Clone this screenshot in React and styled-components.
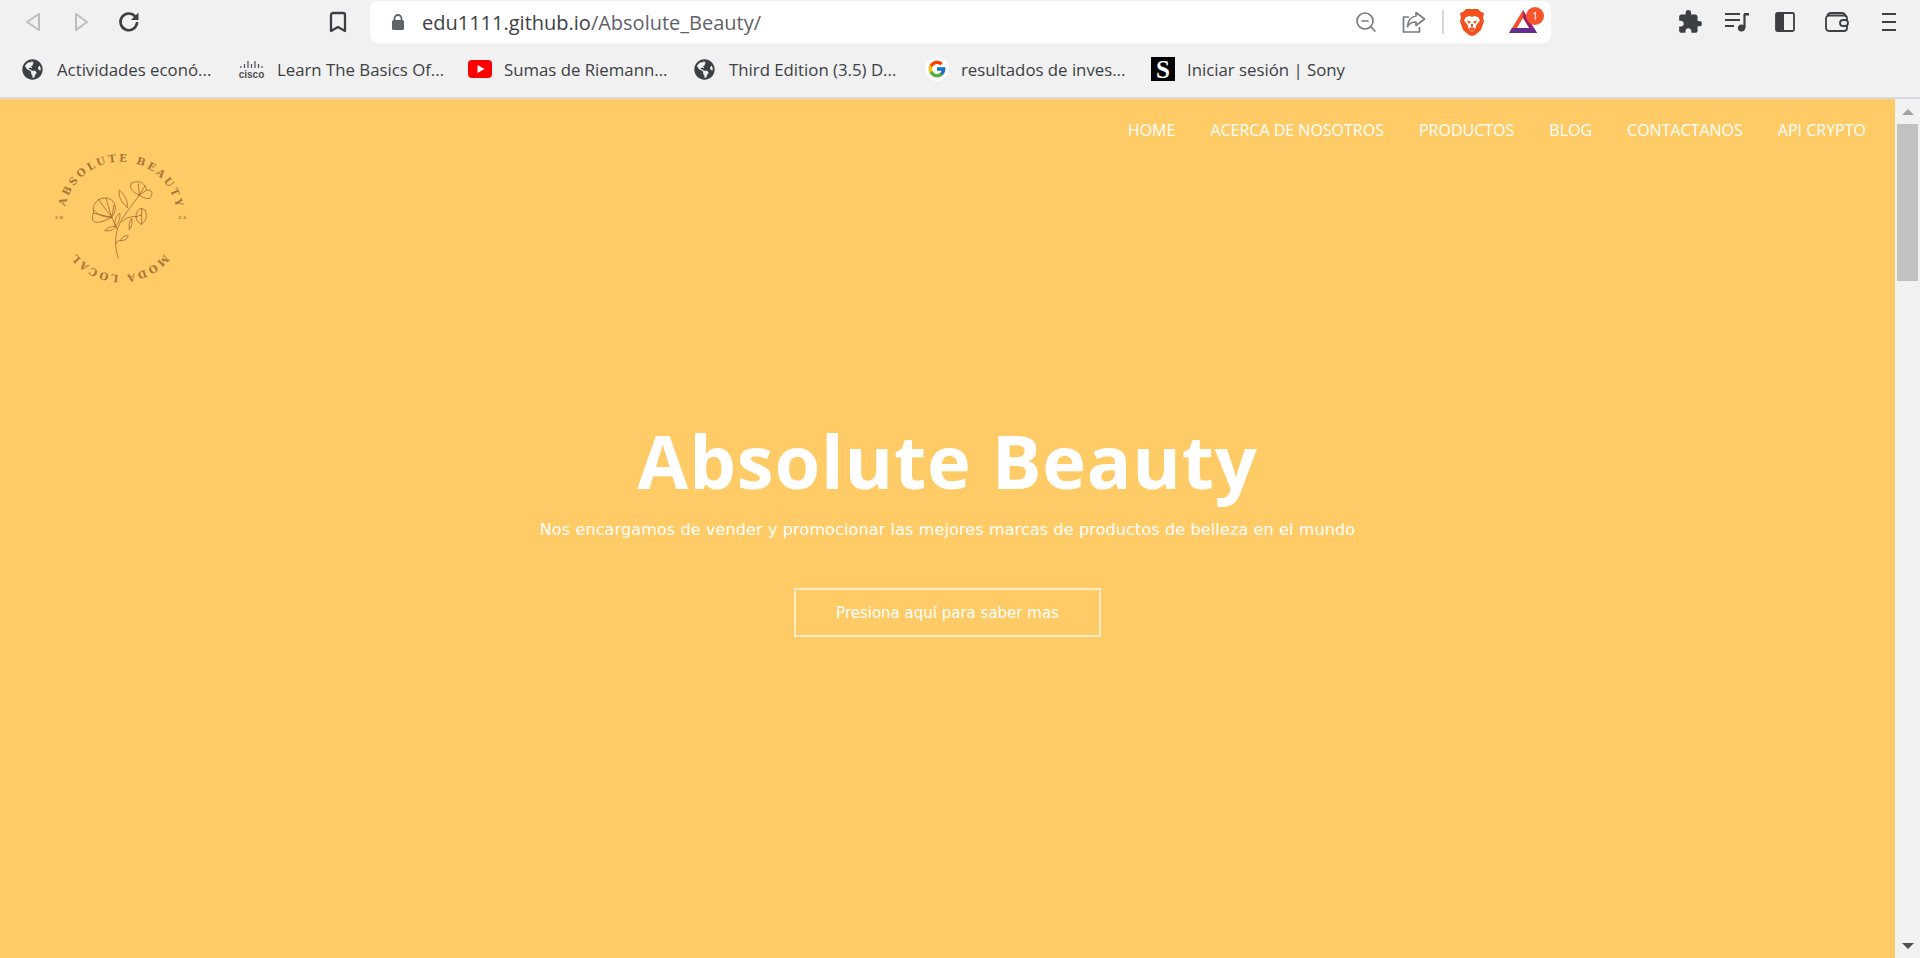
import styled, { createGlobalStyle } from 'styled-components';
import { MdExtension } from 'react-icons/md';
import { FaGlobeAmericas } from 'react-icons/fa';
import { FcGoogle } from 'react-icons/fc';
import { ZoomOut, Bookmark } from 'lucide-react';

const GlobalStyle = createGlobalStyle`
  html, body {
    margin: 0;
    height: 958px;
    overflow: hidden;
    background: #f1f1f1;
    font-family: "Open Sans", "Liberation Sans", sans-serif;
  }
`;

const Window = styled.div`
  display: flex;
  flex-direction: column;
  width: 1920px;
  height: 958px;
`;

const Toolbar = styled.div`
  display: flex;
  align-items: center;
  height: 44px;
  background: #f1f1f1;
`;

const ToolIcon = styled.span`
  display: flex;
  flex: none;
  margin-left: ${(p) => p.$ml || 0}px;
  color: ${(p) => p.$color || '#3c3f43'};
`;

const AddressBar = styled.div`
  display: flex;
  align-items: center;
  flex: none;
  width: 1181px;
  height: 42px;
  margin-left: 20px;
  padding-left: 21px;
  box-sizing: border-box;
  background: #fff;
  border-radius: 8px;
`;

const Url = styled.span`
  margin-left: 17px;
  font-size: 20px;
  color: #5f6368;
  white-space: nowrap;
`;

const Host = styled.span`
  color: #3c3f43;
`;

const Spacer = styled.div`
  flex: 1;
`;

const Divider = styled.span`
  width: 2px;
  height: 24px;
  margin-left: 16px;
  background: #d5d6d8;
`;

const Badge = styled.span`
  position: absolute;
  top: -3px;
  right: -7px;
  width: 18px;
  height: 18px;
  border-radius: 50%;
  background: #f9532e;
  color: #fff;
  font-size: 10px;
  line-height: 18px;
  text-align: center;
`;

const BatWrap = styled.span`
  position: relative;
  display: flex;
  flex: none;
  margin-left: 25px;
  margin-right: 14px;
`;

const BookmarksBar = styled.div`
  display: flex;
  align-items: center;
  height: 55px;
  padding-bottom: 3px;
  box-sizing: border-box;
  background: #f1f1f1;
  border-bottom: 2px solid #d8dadf;
`;

const Bookmarked = styled.div`
  display: flex;
  align-items: center;
  flex: none;
  width: ${(p) => p.$w}px;
  margin-left: ${(p) => p.$ml || 0}px;
  font-size: 16.8px;
  color: #3c3f43;
  white-space: nowrap;
`;

const BookmarkText = styled.span`
  margin-left: ${(p) => p.$gap || 14}px;
`;

const GoogleDot = styled.span`
  display: flex;
  align-items: center;
  justify-content: center;
  width: 24px;
  height: 24px;
  border-radius: 50%;
  background: #fff;
`;

const SonyBox = styled.span`
  display: block;
  width: 24px;
  height: 24px;
  background: #000;
  color: #fff;
  font-family: "Liberation Serif", serif;
  font-size: 25px;
  font-weight: 700;
  line-height: 25px;
  text-align: center;
`;

const CiscoMark = styled.span`
  display: flex;
  flex-direction: column;
  align-items: center;
  width: 23px;
  color: #4c4f53;
  font-family: "Liberation Sans", sans-serif;
  font-size: 10px;
  font-weight: 700;
  line-height: 9px;
`;

const Viewport = styled.div`
  display: flex;
  flex: 1;
  min-height: 0;
`;

const Page = styled.main`
  display: flex;
  flex-direction: column;
  flex: 1;
  background: #ffcb66;
  color: #fff;
`;

const Header = styled.header`
  display: flex;
  align-items: flex-start;
  justify-content: space-between;
`;

const Logo = styled.svg`
  display: block;
  width: 180px;
  height: 180px;
  margin: 31px 0 0 30px;
`;

const Nav = styled.nav`
  display: flex;
  gap: 35px;
  margin-top: 20px;
  padding-right: 29px;
`;

const NavLink = styled.a`
  font-size: 16px;
  line-height: 22px;
  color: #fff;
  white-space: nowrap;
`;

const Hero = styled.section`
  display: flex;
  flex-direction: column;
  align-items: center;
  margin-top: 109px;
`;

const Title = styled.h1`
  margin: 0;
  font-family: "Open Sans", sans-serif;
  font-size: 74px;
  font-weight: 700;
  letter-spacing: 0.85px;
  line-height: 84px;
  color: #fff;
`;

const Subtitle = styled.p`
  margin: 15px 0 0;
  font-family: "DejaVu Sans", sans-serif;
  font-size: 16px;
  font-weight: 400;
  letter-spacing: 0.13px;
  line-height: 24px;
  color: #fff;
`;

const CtaButton = styled.a`
  display: flex;
  align-items: center;
  justify-content: center;
  box-sizing: border-box;
  width: 307px;
  height: 49px;
  margin-top: 46px;
  border: 2px solid rgba(255, 255, 255, 0.6);
  font-family: "DejaVu Sans", sans-serif;
  font-size: 15px;
  color: #fff;
`;

const Scrollbar = styled.aside`
  display: flex;
  flex-direction: column;
  align-items: center;
  flex: none;
  width: 25px;
  background: #f1f1f1;
`;

const ArrowBox = styled.div`
  display: flex;
  align-items: center;
  justify-content: center;
  flex: none;
  height: 25px;
`;

const Arrow = styled.span`
  width: 0;
  height: 0;
  border-left: 6px solid transparent;
  border-right: 6px solid transparent;
  ${(p) => (p.$down ? 'border-top: 6px solid #505050;' : 'border-bottom: 6px solid #a3a3a3;')}
`;

const Thumb = styled.div`
  flex: none;
  width: 21px;
  height: 157px;
  background: #c1c1c1;
`;

const Grow = styled.div`
  flex: 1;
`;

const BackIcon = () => (
  <svg width="16" height="20" viewBox="0 0 16 20" fill="none" stroke="#bdbdbd" strokeWidth="2" strokeLinejoin="round">
    <path d="M14 2 2 10l12 8z" />
  </svg>
);

const ForwardIcon = () => (
  <svg width="15" height="20" viewBox="0 0 15 20" fill="none" stroke="#bdbdbd" strokeWidth="2" strokeLinejoin="round">
    <path d="M2 2l11 8-11 8z" />
  </svg>
);

const ReloadIcon = () => (
  <svg width="22" height="22" viewBox="0 0 22 22" fill="none">
    <path d="M17.5 6A8.3 8.3 0 1 0 19 12" stroke="#3c3f43" strokeWidth="2.6" strokeLinecap="round" />
    <path d="M20.5 1.5v7.5h-7.5z" fill="#3c3f43" />
  </svg>
);

const LockIcon = () => (
  <svg width="14" height="16" viewBox="0 0 14 16">
    <path d="M3.5 7V4.5a3.5 3.5 0 0 1 7 0V7" fill="none" stroke="#5f6368" strokeWidth="1.8" />
    <rect x="1" y="6" width="12" height="10" rx="1.5" fill="#5f6368" />
  </svg>
);

const ShareIcon = () => (
  <svg width="24" height="22" viewBox="0 0 24 22" fill="none" stroke="#7a7d81" strokeWidth="1.7" strokeLinejoin="round">
    <path d="M7 6H1.5v15h16v-5" />
    <path d="M14 1.5 22.5 8 14 14.5V11c-4 0-6.500 1-8.500 4.500C6 10 9 5.500 14 5z" />
  </svg>
);

const BraveIcon = () => (
  <svg width="24" height="27" viewBox="0 0 24 27">
    <path d="M6 0h12l3 3 3 1-1 5 1 3-3 9-6 5-3 1-3-1-6-5-3-9 1-3L0 4l3-1z" fill="#f4511e" />
    <path d="M6 8l3.500-1L12 8l2.500-1L18 8l2 3.500-3.500 4-1 4L12 23l-3.500-3.500-1-4-3.500-4z" fill="#fff" />
    <path d="M8.500 19h7L12 22.500z" fill="#f4511e" />
    <path d="M7 11.500l3.500 1v1.500l-2 .5zM17 11.500l-3.500 1v1.500l2 .5zM11 15h2v3.500h-2z" fill="#f4511e" />
  </svg>
);

const BatIcon = () => (
  <svg width="28" height="24" viewBox="0 0 28 24">
    <path d="M14 0 0 23h6L14 9z" fill="#f4502c" />
    <path d="M14 0 28 23h-5L14 9z" fill="#9e1f63" />
    <path d="M3 18h22l3 5H0z" fill="#662d91" />
    <path d="M14 8l6 10H8z" fill="#fff" />
  </svg>
);

const MusicIcon = () => (
  <svg width="24" height="20" viewBox="0 0 24 20">
    <path d="M0 2h15M0 8h15M0 14h9" stroke="#3c3f43" strokeWidth="2" />
    <path d="M19.500 2v14" stroke="#3c3f43" strokeWidth="2.200" />
    <path d="M19 1h5v2.500h-5z" fill="#3c3f43" />
    <circle cx="16.500" cy="16" r="3.600" fill="#3c3f43" />
  </svg>
);

const SidebarIcon = () => (
  <svg width="20" height="20" viewBox="0 0 20 20">
    <rect x="1" y="1" width="18" height="18" rx="1.500" fill="none" stroke="#3c3f43" strokeWidth="1.800" />
    <rect x="1" y="1" width="8" height="18" fill="#3c3f43" />
  </svg>
);

const WalletIcon = () => (
  <svg width="24" height="20" viewBox="0 0 24 20" fill="none" stroke="#3c3f43" strokeWidth="1.800">
    <rect x="1" y="3.500" width="21" height="15.500" rx="3" />
    <path d="M2.500 3.500C3 1.800 4 1 6 1h11c2 0 3 1 3.500 3" />
    <rect x="15" y="8" width="8" height="6" rx="3" fill="#f1f1f1" />
  </svg>
);

const MenuIcon = () => (
  <svg width="14" height="20" viewBox="0 0 14 20" stroke="#3c3f43" strokeWidth="2">
    <path d="M0 2h14M0 10h14M0 18h14" />
  </svg>
);

const YoutubeIcon = () => (
  <svg width="24" height="24" viewBox="0 0 24 24">
    <rect x="0" y="3" width="24" height="18" rx="4" fill="#ff0000" />
    <path d="M9.500 8v8l7-4z" fill="#fff" />
  </svg>
);

const CiscoBars = () => (
  <svg width="23" height="10" viewBox="0 0 23 10" stroke="#4c4f53" strokeWidth="1.200">
    <path d="M1 6v2M4.500 4v4M8 1v7M11.500 4v4M15 1v7M18.500 4v4M22 6v2" />
  </svg>
);

const Globe = () => <FaGlobeAmericas size={21} color="#3c3f43" />;

const FlowerLogo = () => (
  <Logo viewBox="0 0 540 540">
    <defs>
      <path id="logo-ring" d="M102 265A170 170 0 1 1 442 265A170 170 0 1 1 102 265" />
    </defs>
    <g fill="#a9753a" fontFamily="DejaVu Serif, serif" fontWeight="700" fontSize="31">
      <text>
        <textPath href="#logo-ring" startOffset="36" textLength="463" lengthAdjust="spacing">ABSOLUTE BEAUTY</textPath>
      </text>
      <text>
        <textPath href="#logo-ring" startOffset="650" textLength="303" lengthAdjust="spacing">MODA LOCAL</textPath>
      </text>
      <text x="75" y="267" fontSize="13" letterSpacing="5">20</text>
      <text x="445" y="267" fontSize="13" letterSpacing="5">22</text>
    </g>
    <g fill="none" stroke="#96622b" strokeWidth="2.200" strokeLinejoin="round" strokeLinecap="round">
      <path d="M265 385C257 360 253 335 262 298C272 265 300 235 328 195" />
      <path d="M245 262C215 278 195 282 188 270C183 258 194 250 190 238C188 218 212 198 235 205C258 212 264 240 245 262" />
      <path d="M245 262L205 208M245 262L228 205M245 262L252 225M245 262L192 250M245 262C225 262 205 258 192 240M245 262L262 298" />
      <path d="M328 195C310 190 298 175 303 160C320 150 345 155 350 180C368 180 370 190 360 205C345 208 335 200 328 195" />
      <path d="M328 195L325 162M328 195L350 180M328 195L345 168" />
      <path d="M318 260C318 240 330 230 345 240C352 255 350 270 335 283C325 280 318 270 318 260" />
      <path d="M318 260L335 255M335 235L335 283M276 275C290 262 305 258 318 260" />
      <path d="M292 232C270 215 265 195 268 180C285 195 295 215 292 232" />
      <path d="M255 290C252 270 260 255 270 250C270 270 265 282 255 290" />
      <path d="M225 302C235 290 250 288 258 290C250 300 238 305 225 302" />
      <path d="M298 298C295 285 300 270 305 265C308 280 305 290 298 298" />
      <path d="M258 340C262 330 266 332 272 332C275 320 285 315 295 318C290 328 282 333 272 332" />
    </g>
  </Logo>
);

const navLinks = ['HOME', 'ACERCA DE NOSOTROS', 'PRODUCTOS', 'BLOG', 'CONTACTANOS', 'API CRYPTO'];

export default function App() {
  return (
    <Window>
      <GlobalStyle />
      <Toolbar>
        <ToolIcon $ml={25}><BackIcon /></ToolIcon>
        <ToolIcon $ml={33}><ForwardIcon /></ToolIcon>
        <ToolIcon $ml={29}><ReloadIcon /></ToolIcon>
        <ToolIcon $ml={186}><Bookmark size={24} strokeWidth={2.3} /></ToolIcon>
        <AddressBar>
          <LockIcon />
          <Url><Host>edu1111.github.io</Host>/Absolute_Beauty/</Url>
          <Spacer />
          <ToolIcon $color="#7a7d81"><ZoomOut size={24} strokeWidth={1.7} /></ToolIcon>
          <ToolIcon $ml={24}><ShareIcon /></ToolIcon>
          <Divider />
          <ToolIcon $ml={16}><BraveIcon /></ToolIcon>
          <BatWrap>
            <BatIcon />
            <Badge>1</Badge>
          </BatWrap>
        </AddressBar>
        <ToolIcon $ml={126}><MdExtension size={26} /></ToolIcon>
        <ToolIcon $ml={22}><MusicIcon /></ToolIcon>
        <ToolIcon $ml={26}><SidebarIcon /></ToolIcon>
        <ToolIcon $ml={30}><WalletIcon /></ToolIcon>
        <ToolIcon $ml={33}><MenuIcon /></ToolIcon>
      </Toolbar>
      <BookmarksBar>
        <Bookmarked $ml={22} $w={218}><Globe /><BookmarkText>Actividades econó...</BookmarkText></Bookmarked>
        <Bookmarked $w={228}><CiscoMark><CiscoBars />cisco</CiscoMark><BookmarkText>Learn The Basics Of...</BookmarkText></Bookmarked>
        <Bookmarked $w={226}><YoutubeIcon /><BookmarkText $gap={12}>Sumas de Riemann...</BookmarkText></Bookmarked>
        <Bookmarked $w={231}><Globe /><BookmarkText>Third Edition (3.5) D...</BookmarkText></Bookmarked>
        <Bookmarked $w={226}><GoogleDot><FcGoogle size={20} /></GoogleDot><BookmarkText $gap={12}>resultados de inves...</BookmarkText></Bookmarked>
        <Bookmarked $w={220}><SonyBox>S</SonyBox><BookmarkText $gap={12}>Iniciar sesión | Sony</BookmarkText></Bookmarked>
      </BookmarksBar>
      <Viewport>
        <Page>
          <Header>
            <FlowerLogo />
            <Nav>
              {navLinks.map((link) => (
                <NavLink key={link}>{link}</NavLink>
              ))}
            </Nav>
          </Header>
          <Hero>
            <Title>Absolute Beauty</Title>
            <Subtitle>Nos encargamos de vender y promocionar las mejores marcas de productos de belleza en el mundo</Subtitle>
            <CtaButton>Presiona aquí para saber mas</CtaButton>
          </Hero>
        </Page>
        <Scrollbar>
          <ArrowBox><Arrow /></ArrowBox>
          <Thumb />
          <Grow />
          <ArrowBox><Arrow $down /></ArrowBox>
        </Scrollbar>
      </Viewport>
    </Window>
  );
}
